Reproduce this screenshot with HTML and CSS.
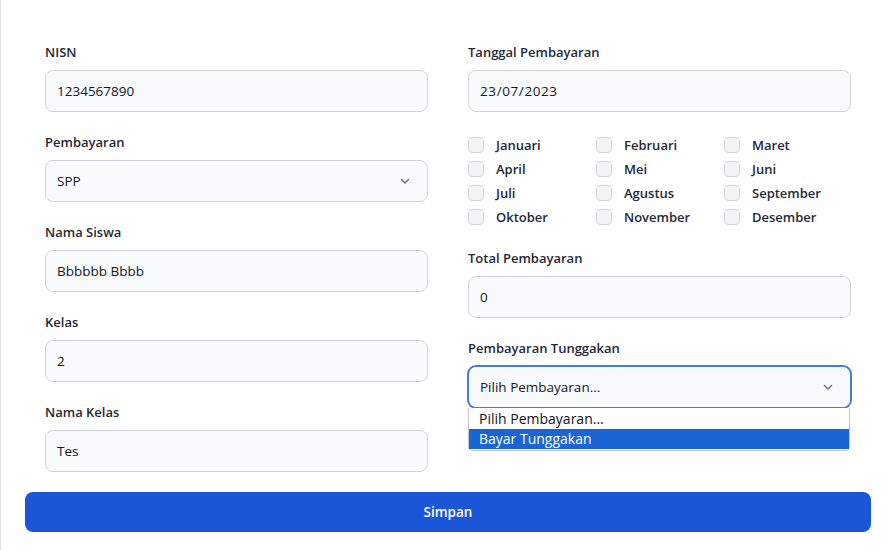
FILE: index.html
```html
<!DOCTYPE html>
<html lang="id">
<head>
<meta charset="utf-8">
<title>Form Pembayaran</title>
<link rel="stylesheet" href="styles.css">
</head>
<body>
<div class="card">
  <form class="form">
    <div class="grid">
      <div class="col">
        <div class="group">
          <label class="label">NISN</label>
          <div class="input">1234567890</div>
        </div>
        <div class="group">
          <label class="label">Pembayaran</label>
          <div class="input select">SPP<svg class="chev" width="12" height="12" viewBox="0 0 12 12"><path d="M2.5 4.5 L6 8 L9.5 4.5" fill="none" stroke="#6b7280" stroke-width="1.5" stroke-linecap="round" stroke-linejoin="round"/></svg></div>
        </div>
        <div class="group">
          <label class="label">Nama Siswa</label>
          <div class="input">Bbbbbb Bbbb</div>
        </div>
        <div class="group">
          <label class="label">Kelas</label>
          <div class="input">2</div>
        </div>
        <div class="group">
          <label class="label">Nama Kelas</label>
          <div class="input">Tes</div>
        </div>
      </div>
      <div class="col">
        <div class="group">
          <label class="label">Tanggal Pembayaran</label>
          <div class="input date">23/07/2023</div>
        </div>
        <div class="group months">
          <label class="check"><span class="box"></span>Januari</label>
          <label class="check"><span class="box"></span>Februari</label>
          <label class="check"><span class="box"></span>Maret</label>
          <label class="check"><span class="box"></span>April</label>
          <label class="check"><span class="box"></span>Mei</label>
          <label class="check"><span class="box"></span>Juni</label>
          <label class="check"><span class="box"></span>Juli</label>
          <label class="check"><span class="box"></span>Agustus</label>
          <label class="check"><span class="box"></span>September</label>
          <label class="check"><span class="box"></span>Oktober</label>
          <label class="check"><span class="box"></span>November</label>
          <label class="check"><span class="box"></span>Desember</label>
        </div>
        <div class="group">
          <label class="label">Total Pembayaran</label>
          <div class="input">0</div>
        </div>
        <div class="group dropwrap">
          <label class="label">Pembayaran Tunggakan</label>
          <div class="input select focus">Pilih Pembayaran...<svg class="chev" width="12" height="12" viewBox="0 0 12 12"><path d="M2.5 4.5 L6 8 L9.5 4.5" fill="none" stroke="#6b7280" stroke-width="1.5" stroke-linecap="round" stroke-linejoin="round"/></svg></div>
          <ul class="dropdown">
            <li class="opt">Pilih Pembayaran...</li>
            <li class="opt sel">Bayar Tunggakan</li>
          </ul>
        </div>
      </div>
    </div>
    <button type="button" class="btn">Simpan</button>
  </form>
</div>
</body>
</html>
```
FILE: styles.css
```css
* { box-sizing: border-box; }
html, body { margin: 0; padding: 0; background: #ffffff; }
body {
  font-family: "Open Sans", "Noto Sans", sans-serif;
  font-size: 14px;
  color: #111827;
  overflow: hidden;
}
.card {
  width: 896px;
  margin-top: -9px;
  border: 1px solid #dfe1e5;
  border-radius: 8px;
  padding: 30px 24px 24px;
  background: #fff;
}
.grid {
  display: grid;
  grid-template-columns: 383px 383px;
  column-gap: 40px;
  padding: 20px 20px 0;
}
.group { margin-bottom: 20px; position: relative; }
.label {
  display: block;
  font-weight: 600;
  font-size: 13px;
  line-height: 20px;
  margin-bottom: 8px;
  color: #1f2937;
}
.input {
  height: 42px;
  display: flex;
  align-items: center;
  padding: 0 11px;
  background: #f9fafb;
  border: 1px solid #d1d5db;
  border-radius: 8px;
  font-size: 13.5px;
  color: #111827;
}
.date { letter-spacing: 0.6px; }
.select { justify-content: space-between; padding-right: 16px; }
.chev { flex: none; }
.focus {
  border: 1px solid #3f7de0;
  box-shadow: 0 0 0 1px #3f7de0;
}
.months {
  display: grid;
  grid-template-columns: 128px 128px 128px;
  grid-auto-rows: 24px;
  padding-top: 1px;
  margin-bottom: 19px;
}
.check {
  display: flex;
  align-items: center;
  gap: 12px;
  font-weight: 600;
  font-size: 13px;
  color: #1f2937;
}
.box {
  width: 16px;
  height: 16px;
  background: #f3f4f6;
  border: 1px solid #d1d5db;
  border-radius: 4px;
  flex: none;
}
.dropdown {
  position: absolute;
  left: 0;
  right: 1px;
  top: 70px;
  margin: 0;
  padding: 1px 0 1px;
  list-style: none;
  background: #fff;
  border: 1px solid #c4c7cc;
  border-top: none;
  border-radius: 0 0 5px 5px;
  font-family: "Open Sans", "Noto Sans", sans-serif;
  font-size: 14px;
  color: #111;
}
.opt { height: 20px; line-height: 20px; padding: 0 10px; }
.opt.sel { background: #1a64d3; color: #fff; }
.btn {
  display: block;
  width: 100%;
  height: 40px;
  border: none;
  border-radius: 8px;
  background: #1c56d8;
  color: #fff;
  font-family: "Open Sans", "Noto Sans", sans-serif;
  font-size: 13.5px;
  font-weight: 600;
}
```
